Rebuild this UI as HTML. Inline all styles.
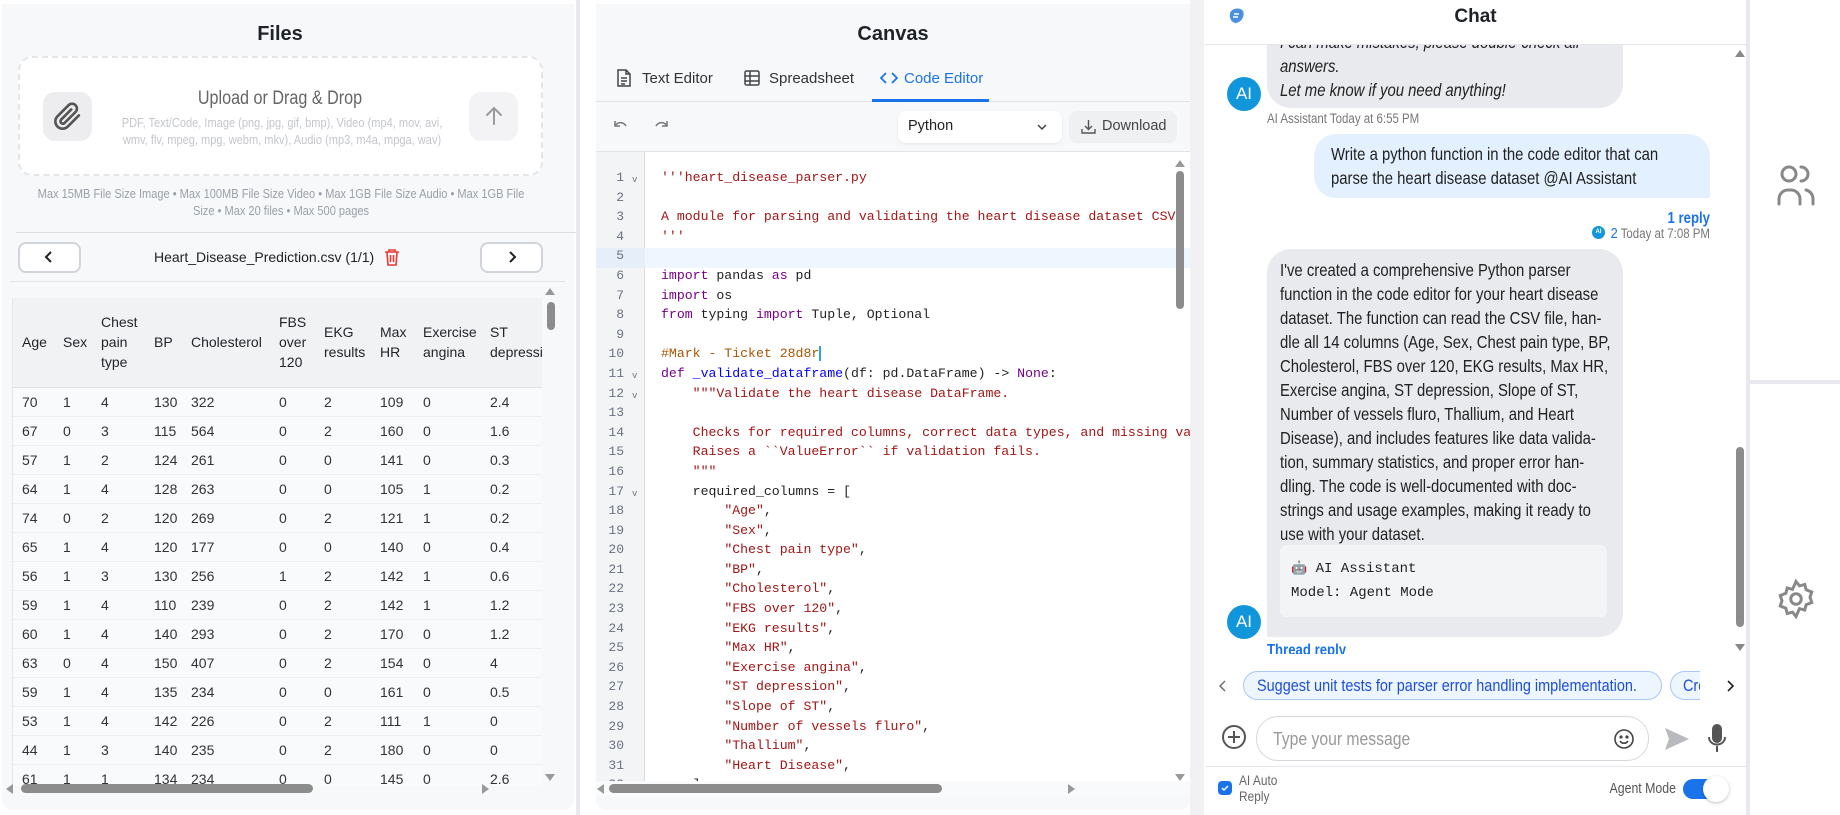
<!DOCTYPE html>
<html><head><meta charset="utf-8">
<style>
*{box-sizing:border-box;margin:0;padding:0}
body{width:1840px;height:815px;overflow:hidden;background:#fff;font-family:"Liberation Sans",Arial,sans-serif;color:#1f2328;position:relative}
.a{position:absolute}
.panel{background:#f7f8fa;border-radius:0 0 10px 10px}
.sep{background:#e8e8ee}
.t{white-space:nowrap}
.n{transform:scaleX(.85);transform-origin:0 0}
.nc{transform:scaleX(.85);transform-origin:50% 0}
.nr{transform:scaleX(.85);transform-origin:100% 0}
table{border-collapse:collapse;font-size:14px;table-layout:fixed}
td{padding:0}
.code div{height:19.6px;line-height:19.6px;white-space:pre}
.s{color:#a31515}.k{color:#770088}.c{color:#aa5500}.f{color:#0000ff}
.ln div{height:19.6px;line-height:19.6px;text-align:right;padding-right:21px;color:#6b7280}
.btn{border:2px solid #d1d5db;border-radius:8px;background:#fff}
.chat{font-size:17.5px;line-height:24px}
</style></head><body>

<div class="a sep" style="left:576px;top:0;width:4px;height:815px"></div>
<div class="a sep" style="left:1190px;top:0;width:14px;height:815px;background:#f1f1f4"></div>
<div class="a sep" style="left:1746px;top:0;width:4px;height:815px"></div>
<div class="a sep" style="left:1750px;top:380px;width:90px;height:4px"></div>

<!-- FILES -->
<div class="a panel" style="left:2px;top:4px;width:572px;height:806px"></div>
<div class="a t" style="left:0;width:560px;top:23px;text-align:center;font-size:20px;font-weight:bold">Files</div>
<div class="a" style="left:18px;top:56px;width:525px;height:120px;border:2px dashed #e3e5e9;border-radius:14px;background:#fff"></div>
<div class="a" style="left:43px;top:92px;width:49px;height:49px;border-radius:12px;background:#ededef"></div>
<svg class="a" style="left:53px;top:102px" width="29" height="29" viewBox="0 0 24 24" fill="none" stroke="#555" stroke-width="2.2" stroke-linecap="round"><path d="M21.4 11.1l-9.2 9.2a6 6 0 01-8.5-8.5l9.2-9.2a4 4 0 015.7 5.7l-9.2 9.2a2 2 0 01-2.8-2.8l8.5-8.5"/></svg>
<div class="a" style="left:469px;top:92px;width:49px;height:49px;border-radius:12px;background:#f3f3f5"></div>
<svg class="a" style="left:482px;top:104px" width="24" height="24" viewBox="0 0 24 24" fill="none" stroke="#9a9a9a" stroke-width="2" stroke-linecap="round"><path d="M12 20V4M5 11l7-7 7 7"/></svg>
<div class="a t nc" style="left:100px;width:360px;top:88px;text-align:center;font-size:19px;color:#666">Upload or Drag &amp; Drop</div>
<div class="a nc" style="left:82px;width:400px;top:114px;text-align:center;font-size:13px;line-height:17px;color:#c4c6cc">PDF, Text/Code, Image (png, jpg, gif, bmp), Video (mp4, mov, avi, wmv, flv, mpeg, mpg, webm, mkv), Audio (mp3, m4a, mpga, wav)</div>
<div class="a nc" style="left:-19px;width:600px;top:185px;text-align:center;font-size:13px;line-height:17px;color:#9aa0a8">Max 15MB File Size Image • Max 100MB File Size Video • Max 1GB File Size Audio • Max 1GB File Size • Max 20 files • Max 500 pages</div>
<div class="a" style="left:16px;top:232px;width:560px;height:1px;background:#ddd"></div>
<div class="a btn" style="left:18px;top:242px;width:63px;height:31px"></div>
<div class="a btn" style="left:480px;top:242px;width:63px;height:31px"></div>
<svg class="a" style="left:42px;top:250px" width="14" height="14" viewBox="0 0 14 14" fill="none" stroke="#222" stroke-width="2"><path d="M9 2L4 7l5 5"/></svg>
<svg class="a" style="left:505px;top:250px" width="14" height="14" viewBox="0 0 14 14" fill="none" stroke="#222" stroke-width="2"><path d="M5 2l5 5-5 5"/></svg>
<div class="a t" style="left:154px;top:249px;font-size:14px;color:#222">Heart_Disease_Prediction.csv (1/1)</div>
<svg class="a" style="left:384px;top:248px" width="16" height="18" viewBox="0 0 16 18" fill="none" stroke="#e53935" stroke-width="1.6"><path d="M1 4h14M5 4V2h6v2M3 4l1 13h8l1-13M6.5 7v7M9.5 7v7"/></svg>
<div class="a" style="left:10px;top:281px;width:555px;height:1px;background:#e2e4e8"></div>
<div class="a" style="left:12px;top:298px;width:530px;height:488px;overflow:hidden;background:#f9fafb;border-left:1px solid #e5e7eb">
<table style="position:absolute;left:0;top:0;width:640px">
<colgroup><col style="width:50px"><col style="width:38px"><col style="width:53px"><col style="width:37px"><col style="width:88px"><col style="width:45px"><col style="width:56px"><col style="width:43px"><col style="width:67px"><col style="width:163px"></colgroup>
<tr style="background:#f1f2f4;height:89px;border-bottom:1px solid #e0e2e6;line-height:20px"><td style="padding-left:9px">Age</td><td>Sex</td><td>Chest<br>pain<br>type</td><td>BP</td><td>Cholesterol</td><td>FBS<br>over<br>120</td><td>EKG<br>results</td><td>Max<br>HR</td><td>Exercise<br>angina</td><td>ST<br>depression</td></tr>
<tbody id="tb"></tbody>
</table>
</div>
<div class="a" style="left:545px;top:288px;width:0;height:0;border:5px solid transparent;border-bottom:7px solid #999;border-top:0"></div>
<div class="a" style="left:547px;top:302px;width:8px;height:28px;border-radius:4px;background:#8c8c8c"></div>
<div class="a" style="left:545px;top:774px;width:0;height:0;border:5px solid transparent;border-top:7px solid #999;border-bottom:0"></div>
<div class="a" style="left:21px;top:784px;width:292px;height:9px;border-radius:5px;background:#8c8c8c"></div>
<div class="a" style="left:6px;top:784px;width:0;height:0;border:5px solid transparent;border-right:7px solid #999;border-left:0"></div>
<div class="a" style="left:482px;top:784px;width:0;height:0;border:5px solid transparent;border-left:7px solid #999;border-right:0"></div>

<!-- CANVAS -->
<div class="a panel" style="left:596px;top:4px;width:594px;height:806px"></div>
<div class="a t" style="left:596px;width:594px;top:23px;text-align:center;font-size:20px;font-weight:bold">Canvas</div>
<svg class="a" style="left:616px;top:69px" width="16" height="18" viewBox="0 0 16 18" fill="none" stroke="#444" stroke-width="1.5"><path d="M2 1h8l4 4v12H2zM10 1v4h4M5 9h6M5 12h6M5 15h4"/></svg>
<div class="a t" style="left:642px;top:70px;font-size:15px;color:#333">Text Editor</div>
<svg class="a" style="left:744px;top:70px" width="16" height="16" viewBox="0 0 16 16" fill="none" stroke="#444" stroke-width="1.5"><rect x="1" y="1" width="14" height="14" rx="1.5"/><path d="M1 6h14M1 11h14M6 1v14"/></svg>
<div class="a t" style="left:769px;top:70px;font-size:15px;color:#333">Spreadsheet</div>
<svg class="a" style="left:880px;top:70px" width="18" height="16" viewBox="0 0 18 16" fill="none" stroke="#1a73e8" stroke-width="1.8"><path d="M6 3L1 8l5 5M12 3l5 5-5 5"/></svg>
<div class="a t" style="left:904px;top:70px;font-size:15px;color:#1a73e8">Code Editor</div>
<div class="a" style="left:596px;top:101px;width:594px;height:1px;background:#e2e4e8"></div>
<div class="a" style="left:872px;top:99px;width:117px;height:3px;background:#1a73e8"></div>
<svg class="a" style="left:612px;top:119px" width="16" height="14" viewBox="0 0 16 14" fill="none" stroke="#777" stroke-width="1.5"><path d="M3 2v5h5M3 7c2-4 8-5 11 0"/></svg>
<svg class="a" style="left:654px;top:119px" width="16" height="14" viewBox="0 0 16 14" fill="none" stroke="#777" stroke-width="1.5"><path d="M13 2v5H8M13 7C11 3 5 2 2 7"/></svg>
<div class="a" style="left:898px;top:111px;width:164px;height:32px;border-radius:8px;background:#fff;box-shadow:0 1px 3px rgba(0,0,0,.08)"></div>
<div class="a t" style="left:908px;top:118px;font-size:14.5px;color:#222">Python</div>
<svg class="a" style="left:1036px;top:122px" width="12" height="10" viewBox="0 0 12 10" fill="none" stroke="#444" stroke-width="1.5"><path d="M2 3l4 4 4-4"/></svg>
<div class="a" style="left:1069px;top:111px;width:108px;height:32px;border-radius:8px;background:#eef0f2"></div>
<svg class="a" style="left:1081px;top:119px" width="15" height="15" viewBox="0 0 15 15" fill="none" stroke="#555" stroke-width="1.4"><path d="M7.5 1v9M4 7l3.5 3.5L11 7M1 10v4h13v-4"/></svg>
<div class="a t" style="left:1102px;top:118px;font-size:14.5px;color:#444">Download</div>
<div class="a" style="left:596px;top:151px;width:594px;height:1px;background:#e2e4e8"></div>
<div class="a" style="left:596px;top:152px;width:594px;height:640px;background:#fff;overflow:hidden">
 <div class="a" style="left:0;top:0;width:49px;height:640px;background:#f3f4f6;border-right:1px solid #dcdde0"></div>
 <div class="a" style="left:49px;top:96px;width:545px;height:20px;background:#eff6ff"></div>
 <div class="a" style="left:0;top:96px;width:49px;height:20px;background:#e5eef9"></div>
 <div class="a ln" style="left:0;top:16px;width:49px;font-family:'Liberation Mono',monospace;font-size:13px" id="ln"></div>
 <div class="a code" style="left:65px;top:16px;font-family:'Liberation Mono',monospace;font-size:13.2px;color:#222">
<div><span class="s">'''heart_disease_parser.py</span></div>
<div> </div>
<div><span class="s">A module for parsing and validating the heart disease dataset CSV.</span></div>
<div><span class="s">'''</span></div>
<div> </div>
<div><span class="k">import</span> pandas <span class="k">as</span> pd</div>
<div><span class="k">import</span> os</div>
<div><span class="k">from</span> typing <span class="k">import</span> Tuple, Optional</div>
<div> </div>
<div><span class="c">#Mark - Ticket 28d8r</span><span style="border-left:2px solid #2aa4e6"></span></div>
<div><span class="k">def</span> <span class="f">_validate_dataframe</span>(df: pd.DataFrame) -&gt; <span class="k">None</span>:</div>
<div>    <span class="s">"""Validate the heart disease DataFrame.</span></div>
<div> </div>
<div><span class="s">    Checks for required columns, correct data types, and missing values.</span></div>
<div><span class="s">    Raises a ``ValueError`` if validation fails.</span></div>
<div><span class="s">    """</span></div>
<div>    required_columns = [</div>
<div>        <span class="s">"Age"</span>,</div>
<div>        <span class="s">"Sex"</span>,</div>
<div>        <span class="s">"Chest pain type"</span>,</div>
<div>        <span class="s">"BP"</span>,</div>
<div>        <span class="s">"Cholesterol"</span>,</div>
<div>        <span class="s">"FBS over 120"</span>,</div>
<div>        <span class="s">"EKG results"</span>,</div>
<div>        <span class="s">"Max HR"</span>,</div>
<div>        <span class="s">"Exercise angina"</span>,</div>
<div>        <span class="s">"ST depression"</span>,</div>
<div>        <span class="s">"Slope of ST"</span>,</div>
<div>        <span class="s">"Number of vessels fluro"</span>,</div>
<div>        <span class="s">"Thallium"</span>,</div>
<div>        <span class="s">"Heart Disease"</span>,</div>
<div>    ]</div>
 </div>
</div>
<div class="a" style="left:1175px;top:160px;width:0;height:0;border:5px solid transparent;border-bottom:7px solid #999;border-top:0"></div>
<div class="a" style="left:1176px;top:171px;width:8px;height:138px;border-radius:4px;background:#8c8c8c"></div>
<div class="a" style="left:1175px;top:774px;width:0;height:0;border:5px solid transparent;border-top:7px solid #999;border-bottom:0"></div>
<div class="a" style="left:596px;top:781px;width:594px;height:16px;background:#f9fafb"></div>
<div class="a" style="left:609px;top:784px;width:333px;height:9px;border-radius:5px;background:#8c8c8c"></div>
<div class="a" style="left:597px;top:784px;width:0;height:0;border:5px solid transparent;border-right:7px solid #999;border-left:0"></div>
<div class="a" style="left:1068px;top:784px;width:0;height:0;border:5px solid transparent;border-left:7px solid #999;border-right:0"></div>

<!-- CHAT -->
<div class="a" style="left:1204px;top:0;width:542px;height:815px;background:#fff"></div>
<div class="a" style="left:1205px;top:44px;width:541px;height:1px;background:#e5e7eb"></div>
<svg class="a" style="left:1226px;top:6px" width="20" height="20" viewBox="0 0 20 20"><path d="M4 7c2-5 10-6 13-2 2 4-1 11-7 12-4 0-7-4-6-10z" fill="#4a90e2"/><path d="M8 8h5M7 11h5" stroke="#fff" stroke-width="1.6"/></svg>
<div class="a t" style="left:1205px;width:541px;top:6px;text-align:center;font-size:19px;font-weight:bold">Chat</div>
<div class="a" style="left:1205px;top:45px;width:530px;height:610px;overflow:hidden">
 <div class="a" style="left:62px;top:-20px;width:356px;height:83px;border-radius:0 0 24px 24px;background:#e9eaee"></div>
 <div class="a t chat n" style="left:75px;top:-15px;font-style:italic;color:#222">I can make mistakes, please double-check all<br>answers.<br>Let me know if you need anything!</div>
 <div class="a" style="left:22px;top:32px;width:34px;height:34px;border-radius:50%;background:#1296db;color:#fff;font-size:17px;text-align:center;line-height:34px">AI</div>
 <div class="a t n" style="left:62px;top:66px;font-size:13.5px;color:#777">AI Assistant Today at 6:55 PM</div>
 <div class="a" style="left:109px;top:89px;width:396px;height:64px;border-radius:22px 22px 0 22px;background:#e3f0ff"></div>
 <div class="a chat n" style="left:126px;top:97px;width:418px;color:#222">Write a python function in the code editor that can parse the heart disease dataset @AI Assistant</div>
 <div class="a t nr" style="left:400px;width:105px;top:165px;text-align:right;font-size:15.5px;color:#1a73e8;font-weight:bold">1 reply</div>
 <div class="a" style="left:387px;top:181px;width:13px;height:13px;border-radius:50%;background:#1296db;color:#fff;font-size:6px;text-align:center;line-height:13px;font-weight:bold">AI</div>
 <div class="a t nr" style="left:355px;width:150px;text-align:right;top:180px;font-size:13.5px;color:#777"><span style="color:#1a73e8;font-size:15px">2</span> Today at 7:08 PM</div>
 <div class="a" style="left:62px;top:204px;width:356px;height:388px;border-radius:24px 24px 24px 0;background:#e9eaee"></div>
 <div class="a chat n" style="left:75px;top:213px;width:392px;color:#222;hyphens:manual">I've created a comprehensive Python parser function in the code editor for your heart disease dataset. The function can read the CSV file, han­dle all 14 columns (Age, Sex, Chest pain type, BP, Cholesterol, FBS over 120, EKG results, Max HR, Exercise angina, ST depression, Slope of ST, Number of vessels fluro, Thallium, and Heart Disease), and includes features like data valida­tion, summary statistics, and proper error han­dling. The code is well-documented with doc­strings and usage examples, making it ready to use with your dataset.</div>
 <div class="a" style="left:75px;top:500px;width:327px;height:72px;border-radius:6px;background:#f3f4f6"></div>
 <div class="a t" style="left:86px;top:512px;font-family:'Liberation Mono',monospace;font-size:14px;line-height:24px;color:#222"><span style="font-size:13px">🤖</span> AI Assistant<br>Model: Agent Mode</div>
 <div class="a" style="left:22px;top:560px;width:34px;height:34px;border-radius:50%;background:#1296db;color:#fff;font-size:17px;text-align:center;line-height:34px">AI</div>
 <div class="a t n" style="left:62px;top:597px;font-size:15.5px;color:#1a73e8;font-weight:bold;height:12px;overflow:hidden">Thread reply</div>
</div>
<div class="a" style="left:1735px;top:50px;width:0;height:0;border:5px solid transparent;border-bottom:7px solid #888;border-top:0"></div>
<div class="a" style="left:1736px;top:447px;width:8px;height:180px;border-radius:4px;background:#8c8c8c"></div>
<div class="a" style="left:1735px;top:644px;width:0;height:0;border:5px solid transparent;border-top:7px solid #888;border-bottom:0"></div>
<svg class="a" style="left:1218px;top:679px" width="10" height="14" viewBox="0 0 10 14" fill="none" stroke="#666" stroke-width="1.4"><path d="M7 2L2 7l5 5"/></svg>
<div class="a" style="left:1243px;top:671px;width:419px;height:29px;border:1px solid #a9c8f5;background:#edf5ff;border-radius:15px"></div>
<div class="a t n" style="left:1257px;top:671px;color:#1d4ed8;font-size:17px;line-height:29px">Suggest unit tests for parser error handling implementation.</div>
<div class="a" style="left:1670px;top:671px;width:30px;height:29px;border:1px solid #a9c8f5;border-right:0;background:#edf5ff;border-radius:15px 0 0 15px;overflow:hidden"><span class="a t n" style="left:12px;top:0;color:#1d4ed8;font-size:17px;line-height:27px">Create</span></div>
<svg class="a" style="left:1725px;top:679px" width="10" height="14" viewBox="0 0 10 14" fill="none" stroke="#222" stroke-width="1.6"><path d="M3 2l5 5-5 5"/></svg>
<svg class="a" style="left:1221px;top:724px" width="26" height="26" viewBox="0 0 26 26" fill="none" stroke="#555" stroke-width="2"><circle cx="13" cy="13" r="11"/><path d="M13 7v12M7 13h12"/></svg>
<div class="a" style="left:1256px;top:716px;width:393px;height:45px;border:1.5px solid #d6d8dc;border-radius:22px;background:#fff"></div>
<div class="a t n" style="left:1273px;top:728px;font-size:18.5px;color:#999">Type your message</div>
<svg class="a" style="left:1613px;top:728px" width="22" height="22" viewBox="0 0 22 22" fill="none" stroke="#444" stroke-width="1.6"><circle cx="11" cy="11" r="9"/><circle cx="8" cy="9" r=".8" fill="#444"/><circle cx="14" cy="9" r=".8" fill="#444"/><path d="M7 13c2 3 6 3 8 0"/></svg>
<svg class="a" style="left:1664px;top:726px" width="26" height="26" viewBox="0 0 26 26"><path d="M1 2l24 11L1 24l4-11z" fill="#b8babd"/></svg>
<svg class="a" style="left:1706px;top:724px" width="22" height="30" viewBox="0 0 22 30" fill="none" stroke="#555" stroke-width="2"><rect x="7" y="1" width="8" height="17" rx="4" fill="#555"/><path d="M3 13c0 10 16 10 16 0M11 22v6"/></svg>
<div class="a" style="left:1205px;top:766px;width:541px;height:1px;background:#e5e7eb"></div>
<div class="a" style="left:1218px;top:781px;width:14px;height:14px;border-radius:4px;background:#1a73e8"></div>
<svg class="a" style="left:1220px;top:783px" width="10" height="10" viewBox="0 0 10 10" fill="none" stroke="#fff" stroke-width="1.5"><path d="M2 5l2 2 4-4"/></svg>
<div class="a n" style="left:1239px;top:772px;font-size:14px;line-height:16px;color:#666">AI Auto<br>Reply</div>
<div class="a t nr" style="left:1576px;width:100px;text-align:right;top:781px;font-size:14.5px;color:#555">Agent Mode</div>
<div class="a" style="left:1683px;top:779px;width:40px;height:20px;border-radius:10px;background:#1a73e8"></div>
<div class="a" style="left:1703px;top:776px;width:26px;height:26px;border-radius:50%;background:#fff;box-shadow:0 1px 3px rgba(0,0,0,.25)"></div>

<svg class="a" style="left:1777px;top:164px" width="38" height="42" viewBox="0 0 38 42" fill="none" stroke="#888" stroke-width="3" stroke-linecap="round"><circle cx="12" cy="10" r="7"/><path d="M2 40v-5a9 9 0 019-9h3a9 9 0 019 9v5M24 3a7 7 0 010 14M29 26a9 9 0 017 9v5"/></svg>
<svg class="a" style="left:1775px;top:576px" width="42" height="46" viewBox="0 0 24 24" fill="none" stroke="#888" stroke-width="1.7"><circle cx="12" cy="12" r="3"/><path d="M12 2l2 2.5 3-.8.8 3L21 8l-1 3 1 3-3.2 1.3-.8 3-3-.8L12 22l-2-2.5-3 .8-.8-3L3 16l1-3-1-3 3.2-1.3.8-3 3 .8z"/></svg>

<script>
var rows=[[70,1,4,130,322,0,2,109,0,2.4],[67,0,3,115,564,0,2,160,0,1.6],[57,1,2,124,261,0,0,141,0,0.3],[64,1,4,128,263,0,0,105,1,0.2],[74,0,2,120,269,0,2,121,1,0.2],[65,1,4,120,177,0,0,140,0,0.4],[56,1,3,130,256,1,2,142,1,0.6],[59,1,4,110,239,0,2,142,1,1.2],[60,1,4,140,293,0,2,170,0,1.2],[63,0,4,150,407,0,2,154,0,4],[59,1,4,135,234,0,0,161,0,0.5],[53,1,4,142,226,0,2,111,1,0],[44,1,3,140,235,0,2,180,0,0],[61,1,1,134,234,0,0,145,0,2.6]];
var h='';
rows.forEach(function(r){h+='<tr style="height:29px;border-bottom:1px solid #eceef1;color:#333">';r.forEach(function(v,i){h+='<td'+(i==0?' style="padding-left:9px"':'')+'>'+v+'</td>'});h+='</tr>'});
document.getElementById('tb').innerHTML=h;
var l='',f={1:1,11:1,12:1,17:1};for(var i=1;i<=32;i++)l+='<div style="position:relative">'+i+(f[i]?'<span style="position:absolute;left:36px;font-size:9px;top:3px">v</span>':'')+'</div>';
document.getElementById('ln').innerHTML=l;
</script>
</body></html>
